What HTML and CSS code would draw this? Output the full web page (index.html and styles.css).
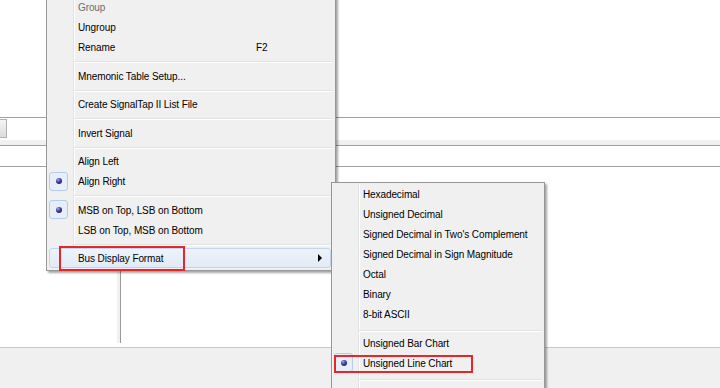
FILE: index.html
```html
<!DOCTYPE html>
<html lang="en">

<head>
	<meta charset="UTF-8">
	<title>Bus Display Format</title>
	<link rel="stylesheet" href="styles.css">
</head>

<body>
	<div class="window">
		<div class="pane-top"></div>
		<div class="toolbar">
			<div class="tool-btn"></div>
		</div>
		<div class="band"></div>
		<div class="header"></div>
		<div class="grid">
			<div class="col-names"></div>
			<div class="col-wave"></div>
		</div>
		<div class="status"></div>
	</div>

	<div class="menu main-menu">
		<div class="item disabled"><span class="gutter"></span><span class="label">Group</span></div>
		<div class="item"><span class="gutter"></span><span class="label">Ungroup</span></div>
		<div class="item"><span class="gutter"></span><span class="label">Rename</span><span class="key">F2</span></div>
		<div class="sep"></div>
		<div class="item"><span class="gutter"></span><span class="label">Mnemonic Table Setup...</span></div>
		<div class="sep"></div>
		<div class="item"><span class="gutter"></span><span class="label">Create SignalTap II List File</span></div>
		<div class="sep"></div>
		<div class="item"><span class="gutter"></span><span class="label">Invert Signal</span></div>
		<div class="sep"></div>
		<div class="item"><span class="gutter"></span><span class="label">Align Left</span></div>
		<div class="item checked"><span class="gutter"><i class="bullet"></i></span><span class="label">Align Right</span></div>
		<div class="sep"></div>
		<div class="item checked"><span class="gutter"><i class="bullet"></i></span><span class="label">MSB on Top, LSB on Bottom</span></div>
		<div class="item"><span class="gutter"></span><span class="label">LSB on Top, MSB on Bottom</span></div>
		<div class="sep"></div>
		<div class="item active"><span class="gutter"></span><span class="label">Bus Display Format</span><span class="arrow"></span></div>
	</div>

	<div class="menu sub-menu">
		<div class="item"><span class="gutter"></span><span class="label">Hexadecimal</span></div>
		<div class="item"><span class="gutter"></span><span class="label">Unsigned Decimal</span></div>
		<div class="item"><span class="gutter"></span><span class="label">Signed Decimal in Two's Complement</span></div>
		<div class="item"><span class="gutter"></span><span class="label">Signed Decimal in Sign Magnitude</span></div>
		<div class="item"><span class="gutter"></span><span class="label">Octal</span></div>
		<div class="item"><span class="gutter"></span><span class="label">Binary</span></div>
		<div class="item"><span class="gutter"></span><span class="label">8-bit ASCII</span></div>
		<div class="sep"></div>
		<div class="item"><span class="gutter"></span><span class="label">Unsigned Bar Chart</span></div>
		<div class="item checked"><span class="gutter"><i class="bullet"></i></span><span class="label">Unsigned Line Chart</span></div>
		<div class="sep"></div>
		<div class="item"><span class="gutter"></span><span class="label">&nbsp;</span></div>
	</div>

	<div class="mark mark-bus"></div>
	<div class="mark mark-line"></div>
</body>

</html>
```

FILE: styles.css
```css
:root {
	--menu-bg: #f0f0f0;
	--menu-border: #979797;
	--line: #a0a0a0;
	--gutter-line: #e2e3e3;
	--mark: #e8262a;
}

body {
	margin: 0;
	width: 720px;
	height: 388px;
	overflow: hidden;
	position: relative;
	background: #ffffff;
	font-family: 'Liberation Sans', Arial, sans-serif;
	font-size: 10px;
	letter-spacing: -0.1px;
	color: #000000;
}

/* background window */

.window {
	display: flex;
	flex-direction: column;
	height: 388px;
}

.pane-top {
	height: 117px;
	border-bottom: 1px solid var(--line);
}

.toolbar {
	height: 22px;
	display: flex;
	align-items: flex-start;
	padding-top: 1px;
	box-sizing: border-box;
}

.tool-btn {
	width: 7px;
	height: 19px;
	border: 1px solid #b0b0b0;
	border-left: none;
	box-sizing: border-box;
	background: linear-gradient(#f4f4f4, #dcdcdc);
}

.band {
	height: 5px;
	background: #f0f0f0;
	border-bottom: 1px solid var(--line);
}

.header {
	height: 20px;
	border-bottom: 1px solid var(--line);
}

.grid {
	flex: 1;
	display: flex;
	padding-bottom: 4px;
}

.col-names {
	width: 117px;
	border-right: 3px solid #f0f0f0;
	position: relative;
}

.col-names::after {
	content: '';
	position: absolute;
	right: -4px;
	top: 0;
	bottom: 0;
	width: 1px;
	background: #9a9a9a;
}

.col-wave {
	flex: 1;
}

.status {
	height: 40px;
	background: #f0f0f0;
	border-top: 1px solid #c8c8c8;
}

/* context menus */

.menu {
	position: absolute;
	background: var(--menu-bg);
	border: 1px solid var(--menu-border);
	padding: 2px 0;
	box-shadow: 2px 2px 2px rgba(0, 0, 0, 0.35);
}

.main-menu {
	left: 46px;
	top: -6px;
	width: 288px;
}

.sub-menu {
	left: 331px;
	top: 182px;
	width: 212px;
	padding-top: 1px;
}

.menu::before {
	content: '';
	position: absolute;
	top: 0;
	bottom: 0;
	left: 26px;
	width: 1px;
	background: var(--gutter-line);
	box-shadow: 1px 0 0 #ffffff;
}

.item {
	position: relative;
	display: flex;
	align-items: flex-start;
	height: 20px;
	line-height: 20px;
	padding-right: 17px;
	white-space: nowrap;
}

.item.disabled {
	color: #6d6d6d;
}

.gutter {
	width: 27px;
	height: 20px;
	flex: none;
	display: flex;
	align-items: center;
	padding-left: 2px;
	box-sizing: border-box;
}

.label {
	flex: 1;
	padding: 1px 0 0 4px;
	position: relative;
}

.key {
	width: 62px;
	flex: none;
	padding-top: 1px;
	position: relative;
}

.arrow {
	position: absolute;
	right: 13px;
	top: 6px;
	width: 0;
	height: 0;
	border-left: 4px solid #000000;
	border-top: 4px solid transparent;
	border-bottom: 4px solid transparent;
}

.sep {
	height: 8.5px;
	position: relative;
	margin-left: 27px;
	margin-right: 2px;
}

.sep::after {
	content: '';
	position: absolute;
	left: 0;
	right: 0;
	top: 4px;
	height: 1px;
	background: var(--gutter-line);
	box-shadow: 0 1px 0 #ffffff;
}

.sub-menu .sep::after {
	top: 6px;
}

.item.active::before {
	content: '';
	position: absolute;
	left: 2px;
	right: 4px;
	top: 0;
	bottom: 0;
	border: 1px solid #c3d5ec;
	border-radius: 3px;
	background: linear-gradient(#eef3fa, #e1eaf6);
}

.checked .gutter::before {
	content: '';
	width: 19px;
	height: 19px;
	box-sizing: border-box;
	border: 1px solid #b6cde9;
	border-radius: 3px;
	background: #e6eef9;
}

.bullet {
	position: absolute;
	left: 9px;
	top: 7px;
	width: 6px;
	height: 6px;
	border-radius: 50%;
	background: radial-gradient(circle at 35% 30%, #a6a6ee 0, #3b3b9a 45%, #15154a 100%);
}

/* red annotation boxes */

.mark {
	position: absolute;
	border: 2px solid var(--mark);
	box-sizing: border-box;
}

.mark-bus {
	left: 59px;
	top: 246px;
	width: 126px;
	height: 25px;
}

.mark-line {
	left: 334px;
	top: 355px;
	width: 139px;
	height: 18px;
}
```
